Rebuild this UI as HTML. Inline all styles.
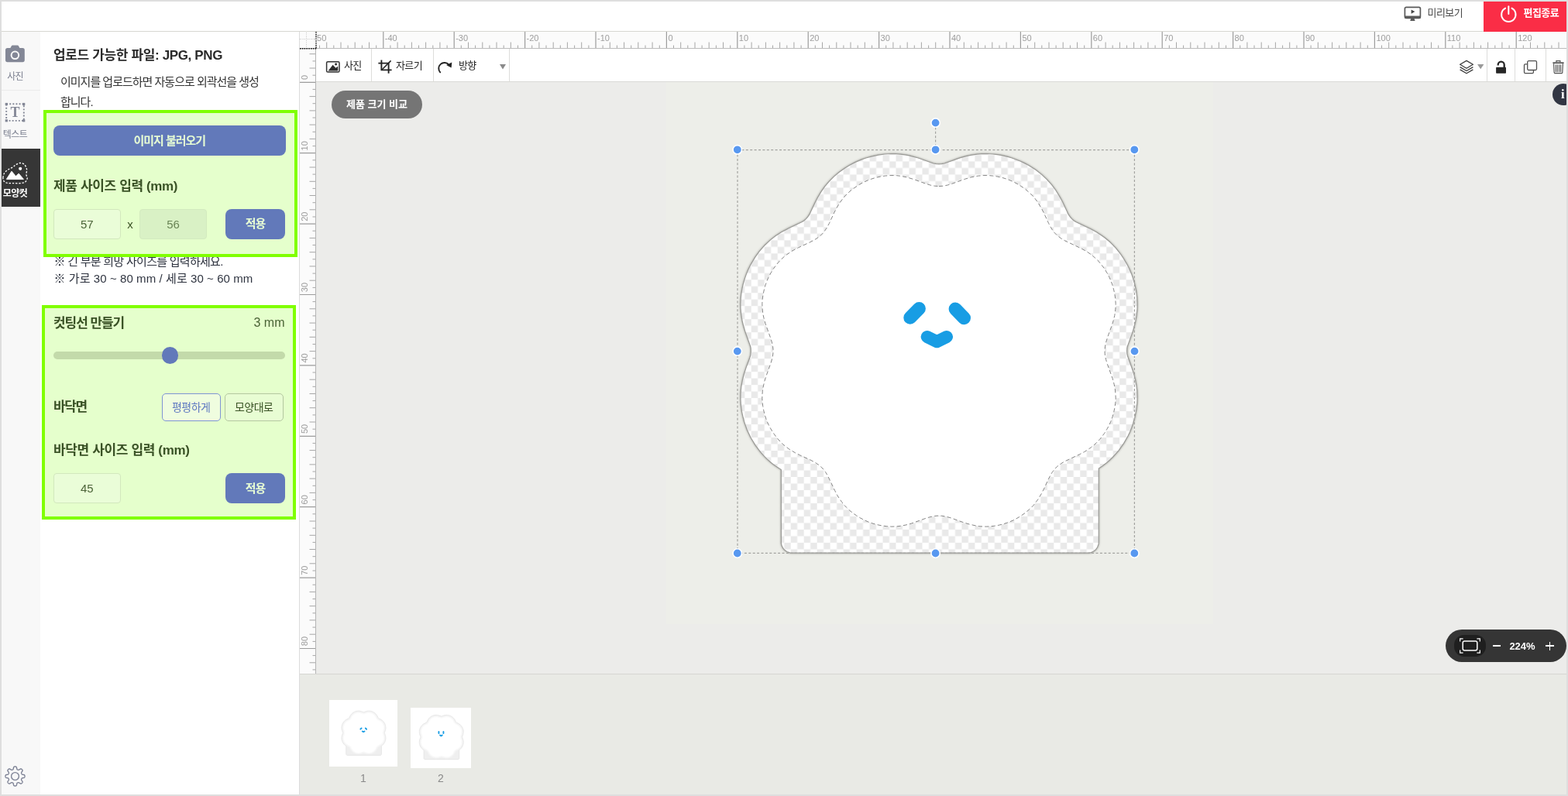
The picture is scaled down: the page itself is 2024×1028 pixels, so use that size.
<!DOCTYPE html>
<html lang="ko">
<head>
<meta charset="utf-8">
<title>모양컷 편집기</title>
<style>
*{box-sizing:border-box;margin:0;padding:0}
html,body{width:2024px;height:1028px;overflow:hidden}
body{position:relative;background:#dedede;font-family:"Liberation Sans","Noto Sans CJK KR",sans-serif;color:#333;font-size:14px;-webkit-font-smoothing:antialiased}
.abs{position:absolute}
.t{position:absolute;white-space:nowrap;line-height:1}
svg{position:absolute;overflow:visible}
/* frame */
#header{left:2px;top:2px;width:2020px;height:38px;background:#fff}
#hline{left:2px;top:40px;width:2020px;height:1px;background:#d7d7d1}
#rail{left:2px;top:41px;width:50px;height:985px;background:#f8f8f8}
#panel{left:52px;top:41px;width:334px;height:985px;background:#fff}
#pborder{left:386px;top:41px;width:1px;height:985px;background:#dcdcdc}
#rtop{left:387px;top:41px;width:1635px;height:21px;background:#fbfbfb}
#rtopline{left:387px;top:62px;width:1635px;height:1px;background:#bcbcbc}
#rleft{left:387px;top:63px;width:20px;height:807px;background:#fbfbfb}
#rleftline{left:407px;top:63px;width:1px;height:807px;background:#b4b4b4}
#toolbar{left:408px;top:63px;width:1614px;height:42px;background:#fff}
#tbline{left:408px;top:105px;width:1614px;height:1px;background:#dadad6}
#canvas{left:408px;top:106px;width:1614px;height:764px;background:#ececea}
#artboard{left:860px;top:106px;width:706px;height:700px;background:#edeee9}
#strip{left:387px;top:870px;width:1635px;height:156px;background:#e9eae5}
#stripline{left:387px;top:870px;width:1635px;height:1px;background:#d6d6d2}
.sep{position:absolute;top:63px;width:1px;height:42px;background:#dddddb}
/* side panel */
.h{position:absolute;left:69px;white-space:nowrap;font-weight:bold;font-size:17px;letter-spacing:-.36px;line-height:20px;color:#2b2b2b}
.g .h{color:#3a5226}
.hl{position:absolute;border:4px solid #80ff00;background:#e5ffcc}
.btn{letter-spacing:-1.05px;position:absolute;background:#6279ba;border-radius:8px;color:#e6fcd4;font-weight:bold;font-size:15px;text-align:center;white-space:nowrap}
.inp{position:absolute;border:1px solid #d2e8bd;border-radius:4px;background:#eafdd8;color:#4b6338;font-size:15px;text-align:center;white-space:nowrap}
.note{position:absolute;left:69.5px;white-space:nowrap;font-size:15px;line-height:20px;color:#2f3440}
.ob{letter-spacing:-.5px;position:absolute;border-radius:5px;font-size:14px;text-align:center;white-space:nowrap;line-height:34px;height:36px;top:508px}
</style>
</head>
<body>
<div id="root" style="position:absolute;left:0;top:0;width:2024px;height:1028px;will-change:transform">
<div id="header" class="abs"></div>
<div id="hline" class="abs"></div>
<div id="rail" class="abs"></div>
<div id="panel" class="abs"></div>
<div id="pborder" class="abs"></div>
<div id="rtop" class="abs"></div>
<div id="rtopline" class="abs"></div>
<div id="rleft" class="abs"></div>
<div id="rleftline" class="abs"></div>
<div id="toolbar" class="abs"></div>
<div id="tbline" class="abs"></div>
<div id="canvas" class="abs"></div>
<div id="artboard" class="abs"></div>
<div id="strip" class="abs"></div>
<div id="stripline" class="abs"></div>

<!-- preview -->
<svg class="abs" style="left:1812px;top:8px" width="23" height="20" viewBox="0 0 23 20">
<rect x="1.4" y="1.3" width="20" height="14" rx="1.8" fill="none" stroke="#5a5a5a" stroke-width="1.7"/>
<rect x="1" y="12.6" width="20.8" height="3.4" rx="1" fill="#5a5a5a"/>
<path d="M9.6,4.6L14.4,7.1L9.6,9.7Z" fill="#444"/>
<path d="M9.3,16H13.5L14.6,18.9H8.2Z" fill="#5a5a5a"/>
</svg>
<div class="t k" style="left:1842.5px;top:8.6px;font-size:13px;letter-spacing:-.55px;color:#4a4a4a;line-height:15px">미리보기</div>
<!-- exit -->
<div class="abs" style="left:1915px;top:2px;width:107px;height:39px;background:#fa2d46"></div>
<svg class="abs" style="left:1936px;top:7px" width="23" height="23" viewBox="0 0 23 23" fill="none" stroke="#fff" stroke-width="2" stroke-linecap="round">
<path d="M7.1,3.6A9.2,9.2 0 1 0 15.5,3.6"/>
<path d="M11.3,1.2V11"/>
</svg>
<div class="t k" style="left:1966.5px;top:8.6px;font-size:13px;letter-spacing:-.55px;font-weight:bold;color:#fff;line-height:15px">편집종료</div>

<!-- camera -->
<svg class="abs" style="left:6px;top:58px" width="27" height="23" viewBox="0 0 27 23">
<path d="M3.6,3.9H7.4L8.6,1.7A2,2 0 0 1 10.3,0.6H16.5A2,2 0 0 1 18.2,1.7L19.4,3.9H23.2A2.6,2.6 0 0 1 25.8,6.5V19.6A2.6,2.6 0 0 1 23.2,22.2H3.6A2.6,2.6 0 0 1 1,19.6V6.5A2.6,2.6 0 0 1 3.6,3.9Z" fill="#838796"/>
<circle cx="13.4" cy="13.3" r="4.8" fill="none" stroke="#f8f8f8" stroke-width="2"/>
</svg>
<div class="t k" style="left:2px;top:92px;width:35px;text-align:center;font-size:12px;letter-spacing:-.75px;color:#7c8090;line-height:14px">사진</div>
<div class="abs" style="left:2px;top:115.5px;width:50px;height:1.5px;background:#ebebeb"></div>
<!-- text -->
<svg class="abs" style="left:6px;top:132px" width="27" height="26" viewBox="0 0 27 26">
<rect x="2.2" y="2.3" width="22.6" height="21.6" fill="none" stroke="#838796" stroke-width="1.9" stroke-dasharray="1.9 2.2"/>
<g fill="#838796"><rect x=".7" y=".9" width="3.2" height="3.2"/><rect x="23.1" y=".9" width="3.2" height="3.2"/><rect x=".7" y="22.2" width="3.2" height="3.2"/><rect x="23.1" y="22.2" width="3.2" height="3.2"/></g>
<text x="13.5" y="19.4" text-anchor="middle" font-family="Liberation Serif, serif" font-weight="bold" font-size="18" fill="#838796">T</text>
</svg>
<div class="t k" style="left:2px;top:167px;width:35px;text-align:center;font-size:12px;letter-spacing:-.5px;color:#7c8090;line-height:14px;overflow:hidden">텍스트</div>
<!-- shape cut (active) -->
<div class="abs" style="left:2px;top:192px;width:50px;height:74.5px;background:#363636"></div>
<svg class="abs" style="left:3px;top:209px" width="34" height="29" viewBox="0 0 34 29">
<path d="M0.9,20.5C1.0,18.8 1.5,16.4 2.6,14.6C3.7,12.8 5.8,11.3 7.6,10.0C9.4,8.7 11.9,7.9 13.6,6.8C15.3,5.7 16.0,4.5 17.6,3.6C19.2,2.7 21.1,1.5 23.0,1.5C24.9,1.5 27.4,2.3 28.8,3.8C30.2,5.2 31.3,8.1 31.6,10.2C31.9,12.3 30.7,14.6 30.8,16.4C30.9,18.2 32.4,19.6 32.2,21.2C32.0,22.8 31.0,24.9 29.6,26.0C28.2,27.1 26.4,27.3 24.0,27.6C21.6,27.9 18.0,27.7 15.0,27.6C12.0,27.6 8.2,27.8 6.0,27.3C3.8,26.8 2.6,25.7 1.8,24.6C1.0,23.5 0.8,22.2 0.9,20.5Z" fill="none" stroke="#fff" stroke-width="1.3" stroke-dasharray="2.4 1.8"/>
<path d="M5.4,22.4L12,12.2L17.4,18.6L21.2,15.2L27.4,22.4Z" fill="#fff" stroke="#fff" stroke-width="1" stroke-linejoin="round"/>
<circle cx="23.2" cy="8.8" r="2.1" fill="#fff"/>
</svg>
<div class="t k" style="left:2px;top:243px;width:35px;text-align:center;font-size:12px;letter-spacing:-.5px;font-weight:bold;color:#fff;line-height:14px;overflow:hidden">모양컷</div>
<!-- settings gear -->
<svg class="abs" style="left:6px;top:989px" width="27" height="27" viewBox="-13.5 -13.5 27 27" fill="none" stroke="#7c8194" stroke-width="1.35" stroke-linejoin="round">
<circle r="4.9"/>
<path d="M3.44,-8.31 3.66,-8.23 3.89,-8.15 4.12,-8.08 4.37,-8.06 4.68,-8.11 5.10,-8.31 5.65,-8.70 6.30,-9.17 6.91,-9.50 7.39,-9.63 7.76,-9.58 8.07,-9.45 8.35,-9.27 8.60,-9.06 8.84,-8.84 9.06,-8.60 9.27,-8.35 9.45,-8.07 9.58,-7.76 9.63,-7.39 9.50,-6.91 9.17,-6.30 8.70,-5.65 8.31,-5.10 8.11,-4.68 8.06,-4.37 8.08,-4.12 8.15,-3.89 8.23,-3.66 8.31,-3.44 8.41,-3.23 8.51,-3.01 8.63,-2.80 8.79,-2.60 9.05,-2.42 9.48,-2.28 10.15,-2.16 10.94,-2.03 11.60,-1.84 12.03,-1.58 12.26,-1.29 12.39,-0.98 12.46,-0.65 12.49,-0.33 12.50,-0.00 12.49,0.33 12.46,0.65 12.39,0.98 12.26,1.29 12.03,1.58 11.60,1.84 10.94,2.03 10.15,2.16 9.48,2.28 9.05,2.42 8.79,2.60 8.63,2.80 8.51,3.01 8.41,3.23 8.31,3.44 8.23,3.66 8.15,3.89 8.08,4.12 8.06,4.37 8.11,4.68 8.31,5.10 8.70,5.65 9.17,6.30 9.50,6.91 9.63,7.39 9.58,7.76 9.45,8.07 9.27,8.35 9.06,8.60 8.84,8.84 8.60,9.06 8.35,9.27 8.07,9.45 7.76,9.58 7.39,9.63 6.91,9.50 6.30,9.17 5.65,8.70 5.10,8.31 4.68,8.11 4.37,8.06 4.12,8.08 3.89,8.15 3.66,8.23 3.44,8.31 3.23,8.41 3.01,8.51 2.80,8.63 2.60,8.79 2.42,9.05 2.28,9.48 2.16,10.15 2.03,10.94 1.84,11.60 1.58,12.03 1.29,12.26 0.98,12.39 0.65,12.46 0.33,12.49 0.00,12.50 -0.33,12.49 -0.65,12.46 -0.98,12.39 -1.29,12.26 -1.58,12.03 -1.84,11.60 -2.03,10.94 -2.16,10.15 -2.28,9.48 -2.42,9.05 -2.60,8.79 -2.80,8.63 -3.01,8.51 -3.23,8.41 -3.44,8.31 -3.66,8.23 -3.89,8.15 -4.12,8.08 -4.37,8.06 -4.68,8.11 -5.10,8.31 -5.65,8.70 -6.30,9.17 -6.91,9.50 -7.39,9.63 -7.76,9.58 -8.07,9.45 -8.35,9.27 -8.60,9.06 -8.84,8.84 -9.06,8.60 -9.27,8.35 -9.45,8.07 -9.58,7.76 -9.63,7.39 -9.50,6.91 -9.17,6.30 -8.70,5.65 -8.31,5.10 -8.11,4.68 -8.06,4.37 -8.08,4.12 -8.15,3.89 -8.23,3.66 -8.31,3.44 -8.41,3.23 -8.51,3.01 -8.63,2.80 -8.79,2.60 -9.05,2.42 -9.48,2.28 -10.15,2.16 -10.94,2.03 -11.60,1.84 -12.03,1.58 -12.26,1.29 -12.39,0.98 -12.46,0.65 -12.49,0.33 -12.50,0.00 -12.49,-0.33 -12.46,-0.65 -12.39,-0.98 -12.26,-1.29 -12.03,-1.58 -11.60,-1.84 -10.94,-2.03 -10.15,-2.16 -9.48,-2.28 -9.05,-2.42 -8.79,-2.60 -8.63,-2.80 -8.51,-3.01 -8.41,-3.23 -8.31,-3.44 -8.23,-3.66 -8.15,-3.89 -8.08,-4.12 -8.06,-4.37 -8.11,-4.68 -8.31,-5.10 -8.70,-5.65 -9.17,-6.30 -9.50,-6.91 -9.63,-7.39 -9.58,-7.76 -9.45,-8.07 -9.27,-8.35 -9.06,-8.60 -8.84,-8.84 -8.60,-9.06 -8.35,-9.27 -8.07,-9.45 -7.76,-9.58 -7.39,-9.63 -6.91,-9.50 -6.30,-9.17 -5.65,-8.70 -5.10,-8.31 -4.68,-8.11 -4.37,-8.06 -4.12,-8.08 -3.89,-8.15 -3.66,-8.23 -3.44,-8.31 -3.23,-8.41 -3.01,-8.51 -2.80,-8.63 -2.60,-8.79 -2.42,-9.05 -2.28,-9.48 -2.16,-10.15 -2.03,-10.94 -1.84,-11.60 -1.58,-12.03 -1.29,-12.26 -0.98,-12.39 -0.65,-12.46 -0.33,-12.49 -0.00,-12.50 0.33,-12.49 0.65,-12.46 0.98,-12.39 1.29,-12.26 1.58,-12.03 1.84,-11.60 2.03,-10.94 2.16,-10.15 2.28,-9.48 2.42,-9.05 2.60,-8.79 2.80,-8.63 3.01,-8.51 3.23,-8.41Z"/>
</svg>

<div class="h k" style="top:62px">업로드 가능한 파일: JPG, PNG</div>
<div class="t k" style="left:78px;top:95.8px;font-size:15px;letter-spacing:-1px;line-height:20px;color:#333">이미지를 업로드하면 자동으로 외곽선을 생성</div>
<div class="t k" style="left:78px;top:121.7px;font-size:15px;letter-spacing:-1px;line-height:20px;color:#333">합니다.</div>
<div class="note k" style="top:327.5px;letter-spacing:-.72px">※ 긴 부분 희망 사이즈를 입력하세요.</div>
<div class="note k" style="top:349.6px;letter-spacing:.08px">※ 가로 30 ~ 80 mm / 세로 30 ~ 60 mm</div>

<!-- highlight box 1 -->
<div class="hl" style="left:56px;top:142px;width:328px;height:190px"></div>
<div class="g">
<div class="btn k" style="left:69px;top:162px;width:299.5px;height:39px;line-height:39px">이미지 불러오기</div>
<div class="h k" style="top:231px">제품 사이즈 입력 (mm)</div>
<div class="inp" style="left:69px;top:270px;width:86.5px;height:38.5px;line-height:38px">57</div>
<div class="t" style="left:158px;top:280px;width:20px;text-align:center;font-size:15px;line-height:20px;color:#3a5226">x</div>
<div class="inp" style="left:180px;top:270px;width:87px;height:38.5px;line-height:38px;background:#d9f1c5;border-color:#d3eabf;color:#6a8556">56</div>
<div class="btn k" style="left:291px;top:270px;width:77px;height:38.5px;line-height:38.5px">적용</div>
</div>

<!-- highlight box 2 -->
<div class="hl" style="left:54px;top:394px;width:328px;height:277px"></div>
<div class="g">
<div class="h k" style="top:408px;letter-spacing:-1.05px">컷팅선 만들기</div>
<div class="t" style="left:300px;top:406.5px;width:67.5px;text-align:right;font-size:16px;line-height:20px;color:#4a6336">3 mm</div>
<div class="abs" style="left:69px;top:453.7px;width:299.4px;height:10.7px;border-radius:5.4px;background:#c3daaa"></div>
<div class="abs" style="left:208.6px;top:448.4px;width:21.4px;height:21.4px;border-radius:50%;background:#6279ba"></div>
<div class="h k" style="top:516px;letter-spacing:-1.35px">바닥면</div>
<div class="ob k" style="left:208.5px;width:76.5px;border:1px solid #7f94d3;background:#effddf;color:#5f78c1">평평하게</div>
<div class="ob k" style="left:289.5px;width:76.5px;border:1px solid #b4c7a0;background:#e8fdd3;color:#3a5226">모양대로</div>
<div class="h k" style="top:571.5px">바닥면 사이즈 입력 (mm)</div>
<div class="inp" style="left:69px;top:611px;width:86.5px;height:38.5px;line-height:38px">45</div>
<div class="btn k" style="left:291px;top:611px;width:77px;height:39px;line-height:39px">적용</div>
</div>

<svg class="abs" style="left:0;top:0" width="2024" height="1028">
<path d="M494.8,41V62M586.2,41V62M677.6,41V62M769.0,41V62M860.4,41V62M951.8,41V62M1043.2,41V62M1134.6,41V62M1226.0,41V62M1317.4,41V62M1408.8,41V62M1500.2,41V62M1591.6,41V62M1683.0,41V62M1774.4,41V62M1865.8,41V62M1957.2,41V62" stroke="#9c9c9c" stroke-width="1.2" fill="none"/>
<path d="M421.7,54.5V62M440.0,54.5V62M458.2,54.5V62M476.5,54.5V62M513.1,54.5V62M531.4,54.5V62M549.6,54.5V62M567.9,54.5V62M604.5,54.5V62M622.8,54.5V62M641.0,54.5V62M659.3,54.5V62M695.9,54.5V62M714.2,54.5V62M732.4,54.5V62M750.7,54.5V62M787.3,54.5V62M805.6,54.5V62M823.8,54.5V62M842.1,54.5V62M878.7,54.5V62M897.0,54.5V62M915.2,54.5V62M933.5,54.5V62M970.1,54.5V62M988.4,54.5V62M1006.6,54.5V62M1024.9,54.5V62M1061.5,54.5V62M1079.8,54.5V62M1098.0,54.5V62M1116.3,54.5V62M1152.9,54.5V62M1171.2,54.5V62M1189.4,54.5V62M1207.7,54.5V62M1244.3,54.5V62M1262.6,54.5V62M1280.8,54.5V62M1299.1,54.5V62M1335.7,54.5V62M1354.0,54.5V62M1372.2,54.5V62M1390.5,54.5V62M1427.1,54.5V62M1445.4,54.5V62M1463.6,54.5V62M1481.9,54.5V62M1518.5,54.5V62M1536.8,54.5V62M1555.0,54.5V62M1573.3,54.5V62M1609.9,54.5V62M1628.2,54.5V62M1646.4,54.5V62M1664.7,54.5V62M1701.3,54.5V62M1719.6,54.5V62M1737.8,54.5V62M1756.1,54.5V62M1792.7,54.5V62M1811.0,54.5V62M1829.2,54.5V62M1847.5,54.5V62M1884.1,54.5V62M1902.4,54.5V62M1920.6,54.5V62M1938.9,54.5V62M1975.5,54.5V62M1993.8,54.5V62M2012.0,54.5V62M412.5,58.5V62M430.8,58.5V62M449.1,58.5V62M467.4,58.5V62M485.7,58.5V62M503.9,58.5V62M522.2,58.5V62M540.5,58.5V62M558.8,58.5V62M577.1,58.5V62M595.3,58.5V62M613.6,58.5V62M631.9,58.5V62M650.2,58.5V62M668.5,58.5V62M686.7,58.5V62M705.0,58.5V62M723.3,58.5V62M741.6,58.5V62M759.9,58.5V62M778.1,58.5V62M796.4,58.5V62M814.7,58.5V62M833.0,58.5V62M851.3,58.5V62M869.5,58.5V62M887.8,58.5V62M906.1,58.5V62M924.4,58.5V62M942.7,58.5V62M960.9,58.5V62M979.2,58.5V62M997.5,58.5V62M1015.8,58.5V62M1034.1,58.5V62M1052.3,58.5V62M1070.6,58.5V62M1088.9,58.5V62M1107.2,58.5V62M1125.5,58.5V62M1143.7,58.5V62M1162.0,58.5V62M1180.3,58.5V62M1198.6,58.5V62M1216.9,58.5V62M1235.1,58.5V62M1253.4,58.5V62M1271.7,58.5V62M1290.0,58.5V62M1308.3,58.5V62M1326.5,58.5V62M1344.8,58.5V62M1363.1,58.5V62M1381.4,58.5V62M1399.7,58.5V62M1417.9,58.5V62M1436.2,58.5V62M1454.5,58.5V62M1472.8,58.5V62M1491.1,58.5V62M1509.3,58.5V62M1527.6,58.5V62M1545.9,58.5V62M1564.2,58.5V62M1582.5,58.5V62M1600.7,58.5V62M1619.0,58.5V62M1637.3,58.5V62M1655.6,58.5V62M1673.9,58.5V62M1692.1,58.5V62M1710.4,58.5V62M1728.7,58.5V62M1747.0,58.5V62M1765.3,58.5V62M1783.5,58.5V62M1801.8,58.5V62M1820.1,58.5V62M1838.4,58.5V62M1856.7,58.5V62M1874.9,58.5V62M1893.2,58.5V62M1911.5,58.5V62M1929.8,58.5V62M1948.1,58.5V62M1966.3,58.5V62M1984.6,58.5V62M2002.9,58.5V62" stroke="#a6a6a6" stroke-width="1" fill="none"/>
<path d="M387,106.3H407M387,197.7H407M387,289.1H407M387,380.5H407M387,471.9H407M387,563.3H407M387,654.7H407M387,746.1H407M387,837.5H407" stroke="#9c9c9c" stroke-width="1.2" fill="none"/>
<path d="M399.5,69.7H407M399.5,88.0H407M399.5,124.6H407M399.5,142.9H407M399.5,161.1H407M399.5,179.4H407M399.5,216.0H407M399.5,234.3H407M399.5,252.5H407M399.5,270.8H407M399.5,307.4H407M399.5,325.7H407M399.5,343.9H407M399.5,362.2H407M399.5,398.8H407M399.5,417.1H407M399.5,435.3H407M399.5,453.6H407M399.5,490.2H407M399.5,508.5H407M399.5,526.7H407M399.5,545.0H407M399.5,581.6H407M399.5,599.9H407M399.5,618.1H407M399.5,636.4H407M399.5,673.0H407M399.5,691.3H407M399.5,709.5H407M399.5,727.8H407M399.5,764.4H407M399.5,782.7H407M399.5,800.9H407M399.5,819.2H407M399.5,855.8H407M403.5,78.9H407M403.5,97.2H407M403.5,115.4H407M403.5,133.7H407M403.5,152.0H407M403.5,170.3H407M403.5,188.6H407M403.5,206.8H407M403.5,225.1H407M403.5,243.4H407M403.5,261.7H407M403.5,280.0H407M403.5,298.2H407M403.5,316.5H407M403.5,334.8H407M403.5,353.1H407M403.5,371.4H407M403.5,389.6H407M403.5,407.9H407M403.5,426.2H407M403.5,444.5H407M403.5,462.8H407M403.5,481.0H407M403.5,499.3H407M403.5,517.6H407M403.5,535.9H407M403.5,554.2H407M403.5,572.4H407M403.5,590.7H407M403.5,609.0H407M403.5,627.3H407M403.5,645.6H407M403.5,663.8H407M403.5,682.1H407M403.5,700.4H407M403.5,718.7H407M403.5,737.0H407M403.5,755.2H407M403.5,773.5H407M403.5,791.8H407M403.5,810.1H407M403.5,828.4H407M403.5,846.6H407M403.5,864.9H407" stroke="#a6a6a6" stroke-width="1" fill="none"/>
<path d="M387,50.5H407M395.5,42V62" stroke="#c4c4c4" stroke-width="1" stroke-dasharray="1 1.5" fill="none"/>
<path d="M408,41V63" stroke="#111" stroke-width="1.4" stroke-dasharray="1.6 1.2" fill="none"/>
<path d="M387,62.8H408.6" stroke="#111" stroke-width="1.4" stroke-dasharray="1.6 1.2" fill="none"/>
<g font-family="Liberation Sans, sans-serif" font-size="11" fill="#9d9d9d">
<text x="405.4" y="52.6">-50</text>
<text x="496.8" y="52.6">-40</text>
<text x="588.2" y="52.6">-30</text>
<text x="679.6" y="52.6">-20</text>
<text x="771.0" y="52.6">-10</text>
<text x="862.4" y="52.6">0</text>
<text x="953.8" y="52.6">10</text>
<text x="1045.2" y="52.6">20</text>
<text x="1136.6" y="52.6">30</text>
<text x="1228.0" y="52.6">40</text>
<text x="1319.4" y="52.6">50</text>
<text x="1410.8" y="52.6">60</text>
<text x="1502.2" y="52.6">70</text>
<text x="1593.6" y="52.6">80</text>
<text x="1685.0" y="52.6">90</text>
<text x="1776.4" y="52.6">100</text>
<text x="1867.8" y="52.6">110</text>
<text x="1959.2" y="52.6">120</text>
<text transform="translate(397.2,103.0) rotate(-90)">0</text>
<text transform="translate(397.2,194.4) rotate(-90)">10</text>
<text transform="translate(397.2,285.8) rotate(-90)">20</text>
<text transform="translate(397.2,377.2) rotate(-90)">30</text>
<text transform="translate(397.2,468.6) rotate(-90)">40</text>
<text transform="translate(397.2,560.0) rotate(-90)">50</text>
<text transform="translate(397.2,651.4) rotate(-90)">60</text>
<text transform="translate(397.2,742.8) rotate(-90)">70</text>
<text transform="translate(397.2,834.2) rotate(-90)">80</text>
</g></svg>
<div class="sep" style="left:479px"></div>
<div class="sep" style="left:559px"></div>
<div class="sep" style="left:657px"></div>
<div class="sep" style="left:1919px"></div>
<div class="sep" style="left:1955px"></div>
<div class="sep" style="left:1995px"></div>
<!-- photo -->
<svg class="abs" style="left:420px;top:78px" width="20" height="17" viewBox="0 0 20 17">
<rect x="1.6" y="1.7" width="16.4" height="13.4" rx="1.6" fill="none" stroke="#333" stroke-width="1.5"/>
<path d="M3.6,13.5L9.6,5.8L13.4,9.7L16.2,7.6V13.5Z" fill="#2c2c2c"/>
<circle cx="13.6" cy="5" r="1.45" fill="#2c2c2c"/>
</svg>
<div class="t k" style="left:444px;top:77px;font-size:13px;letter-spacing:-.62px;color:#262626;line-height:15px">사진</div>
<!-- crop -->
<svg class="abs" style="left:487px;top:76px" width="20" height="20" viewBox="0 0 20 20" fill="none" stroke="#222" stroke-width="1.9">
<path d="M5.4,1.4V14.4H18.6"/>
<path d="M1.4,5.6H14.6V18.8"/>
<path d="M6,14L17.6,2.4" stroke-width="1.5"/>
</svg>
<div class="t k" style="left:511px;top:77px;font-size:13px;letter-spacing:-.62px;color:#262626;line-height:15px">자르기</div>
<!-- rotate -->
<svg class="abs" style="left:564px;top:78px" width="21" height="17" viewBox="0 0 21 17" fill="none">
<path d="M4.2,15.4A7.2,7.2 0 0 1 15.2,5.4" stroke="#222" stroke-width="1.9" stroke-linecap="round"/>
<path d="M12.1,5.9L19.3,2.4L18.6,9.6Z" fill="#222"/>
</svg>
<div class="t k" style="left:592px;top:77px;font-size:13px;letter-spacing:-.62px;color:#262626;line-height:15px">방향</div>
<svg class="abs" style="left:645px;top:83px" width="8" height="7" viewBox="0 0 8 7"><path d="M0,0H8L4,6.6Z" fill="#8a8a8a"/></svg>
<!-- layers -->
<svg class="abs" style="left:1883px;top:77px" width="20" height="19" viewBox="0 0 20 19" fill="none" stroke="#3c3c3c" stroke-width="1.3" stroke-linejoin="round">
<path d="M10,1.4L18.4,6.3L10,11.2L1.6,6.3Z"/>
<path d="M1.6,9.6L10,14.5L18.4,9.6"/>
<path d="M1.6,12.9L10,17.8L18.4,12.9"/>
</svg>
<svg class="abs" style="left:1907.3px;top:83.4px" width="8.4" height="6.4" viewBox="0 0 8.4 6.4"><path d="M0,0H8.4L4.2,6.2Z" fill="#999"/></svg>
<!-- unlock -->
<svg class="abs" style="left:1930px;top:77px" width="16" height="19" viewBox="0 0 16 19">
<rect x="1.1" y="9.7" width="12.9" height="8" rx=".8" fill="#262626"/>
<path d="M3.7,7.5V6.7A4,4 0 0 1 11.7,6.7V10" fill="none" stroke="#262626" stroke-width="2.3"/>
</svg>
<!-- copy -->
<svg class="abs" style="left:1966px;top:77px" width="19" height="19" viewBox="0 0 19 19" fill="none" stroke="#505050" stroke-width="1.3">
<path d="M5.2,5.8H2.9A1.4,1.4 0 0 0 1.5,7.2V16.3A1.4,1.4 0 0 0 2.9,17.7H12A1.4,1.4 0 0 0 13.4,16.3V14"/>
<rect x="5.7" y="1.7" width="11.8" height="11.8" rx="1.5"/>
</svg>
<!-- trash -->
<svg class="abs" style="left:2003px;top:77px" width="17" height="19" viewBox="0 0 17 19" fill="none" stroke="#555" stroke-width="1.2">
<path d="M5.9,3.3V1.6H10.9V3.3"/>
<path d="M1.4,4.2H15.6" stroke-width="1.8"/>
<path d="M2.6,5.2L3.2,16.6A1.2,1.2 0 0 0 4.4,17.6H12.6A1.2,1.2 0 0 0 13.8,16.6L14.4,5.2"/>
<path d="M5.4,6.4V16.2M7.4,6.4V16.2M9.6,6.4V16.2M11.6,6.4V16.2" stroke-width="1.1"/>
</svg>

<div class="abs" style="left:428px;top:116.5px;width:117px;height:36.5px;border-radius:19px;background:#757575"></div>
<div class="t k" style="left:428px;top:116px;width:117px;height:37px;line-height:37px;text-align:center;color:#fff;font-weight:bold;font-size:13px">제품 크기 비교</div>

<svg class="abs" style="left:0;top:0" width="2024" height="1028">
<defs>
<pattern id="chk" x="1003.7" y="599" width="16.98" height="16.98" patternUnits="userSpaceOnUse">
<rect width="16.98" height="16.98" fill="#fff"/>
<rect x="8.49" y="0" width="8.49" height="8.49" fill="#e9e9e9"/>
<rect x="0" y="8.49" width="8.49" height="8.49" fill="#e9e9e9"/>
</pattern>
<filter id="sh" x="-5%" y="-5%" width="110%" height="110%"><feGaussianBlur stdDeviation="1.3"/></filter>
<g id="face" fill="none" stroke="#189de4" stroke-linecap="round" stroke-linejoin="round">
<path d="M1174.8,410.2L1186.4,398.6M1233.1,399L1244.5,410.7" stroke-width="17"/>
<path d="M1196.7,435L1209.4,441.2L1222,435" stroke-width="16"/>
</g>
<path id="outerp" d="M968.3,446.3 969.1,449.7 969.3,453.3 968.8,458.6 967.8,462.0 963.0,474.9 960.4,483.0 958.3,491.2 956.7,500.1 956.0,508.0 955.9,514.9 956.4,523.4 957.5,531.7 958.7,537.2 960.5,544.4 964.2,554.9 969.1,565.2 975.1,575.1 981.9,584.2 985.7,588.4 989.8,592.6 993.8,596.2 998.4,599.9 1003.2,603.3 1008.3,606.6 1008.4,701.6 1008.9,704.3 1010.7,708.0 1012.4,710.1 1015.7,712.5 1019.6,713.9 1022.3,714.2 1404.3,714.2 1408.4,713.6 1412.1,711.8 1414.2,710.1 1416.6,706.8 1418.0,702.9 1418.3,700.2 1418.3,605.0 1423.2,601.7 1428.0,598.1 1432.5,594.2 1436.3,590.5 1440.3,586.2 1444.0,581.8 1450.7,572.4 1456.2,562.8 1458.6,557.7 1460.8,552.3 1462.6,547.0 1464.7,539.9 1467.0,528.5 1467.9,519.9 1468.1,511.9 1467.8,505.0 1466.8,497.0 1465.6,490.6 1463.4,482.4 1461.0,475.0 1455.7,460.3 1454.9,456.9 1454.7,453.3 1454.9,449.7 1455.7,446.3 1461.1,431.4 1463.5,424.1 1465.6,415.9 1467.1,407.5 1468.0,398.6 1468.1,391.7 1467.6,383.2 1466.5,374.9 1464.7,366.9 1462.6,359.6 1460.5,353.4 1457.4,346.3 1454.5,340.8 1450.3,333.7 1445.7,327.0 1440.8,320.9 1436.3,316.1 1431.9,311.8 1425.8,306.8 1420.4,302.9 1415.4,299.8 1408.2,295.8 1389.2,286.8 1386.2,284.9 1383.5,282.6 1381.2,279.9 1379.2,276.9 1371.5,260.5 1367.2,252.7 1362.7,245.5 1357.8,238.9 1351.5,231.8 1344.9,225.6 1336.6,219.1 1327.4,213.3 1322.4,210.6 1316.8,208.0 1306.2,204.0 1300.9,202.4 1293.6,200.7 1287.5,199.7 1281.7,199.0 1274.0,198.5 1267.2,198.6 1261.1,199.1 1253.1,200.3 1246.8,201.7 1239.0,203.9 1219.0,211.0 1215.5,211.7 1212.0,211.9 1208.5,211.7 1205.0,211.0 1185.2,204.0 1173.7,200.9 1168.0,199.8 1162.1,199.1 1156.2,198.6 1150.2,198.5 1142.1,199.0 1133.9,200.1 1125.6,201.8 1117.8,204.0 1111.7,206.1 1104.1,209.4 1097.2,213.0 1090.3,217.2 1082.9,222.5 1076.3,228.1 1070.1,234.4 1064.4,241.2 1059.7,247.9 1055.3,255.3 1051.5,262.7 1044.8,276.9 1042.8,279.9 1040.5,282.6 1037.8,284.9 1034.8,286.8 1017.9,294.8 1008.6,299.8 1001.2,304.6 994.4,309.9 987.1,316.7 980.1,324.6 974.7,332.1 969.1,341.5 965.7,348.2 963.5,353.6 961.4,359.6 959.3,366.7 957.9,372.8 956.7,380.2 956.1,386.7 955.8,392.5 956.0,398.5 956.5,404.4 957.3,410.2 958.4,416.0 959.8,421.5 962.0,428.8Z"/>
<path id="innerp" d="M1212.0,240.6 1217.6,240.2 1223.3,239.0 1229.1,237.2 1245.4,231.3 1253.9,228.8 1262.4,227.2 1268.9,226.6 1273.1,226.5 1277.4,226.7 1281.6,227.1 1287.8,228.1 1293.9,229.5 1297.9,230.7 1303.8,232.9 1307.7,234.6 1315.0,238.5 1320.3,242.0 1323.7,244.5 1330.1,250.0 1333.1,253.0 1335.9,256.3 1339.7,261.5 1344.3,269.0 1347.3,274.8 1353.6,288.4 1356.5,293.8 1358.5,297.1 1360.8,300.1 1364.7,304.2 1369.2,307.6 1374.2,310.7 1395.5,320.8 1401.3,324.0 1405.0,326.3 1410.2,330.2 1413.5,333.0 1418.0,337.4 1422.1,342.3 1425.8,347.3 1429.1,352.7 1432.0,358.2 1433.7,362.0 1435.9,367.9 1437.6,373.9 1438.9,380.0 1439.8,386.2 1440.2,392.5 1440.1,396.8 1439.7,401.0 1438.8,407.4 1437.8,411.7 1436.0,418.0 1429.4,436.3 1427.6,442.1 1426.4,447.7 1426.0,453.3 1426.4,458.9 1427.6,464.5 1429.4,470.3 1436.0,488.6 1437.8,494.9 1439.2,501.3 1439.9,507.7 1440.2,514.1 1439.8,520.4 1438.9,526.6 1437.6,532.7 1435.9,538.7 1433.7,544.6 1432.0,548.4 1429.1,553.9 1425.8,559.3 1422.1,564.3 1419.4,567.6 1415.0,572.2 1411.9,575.0 1408.5,577.7 1403.1,581.5 1399.4,583.7 1393.5,586.8 1374.2,595.9 1369.2,599.0 1364.7,602.4 1360.8,606.5 1358.5,609.5 1356.5,612.8 1353.6,618.2 1347.3,631.8 1344.3,637.6 1339.7,645.1 1335.9,650.3 1333.1,653.6 1330.1,656.6 1323.7,662.1 1316.8,667.0 1309.6,671.1 1303.8,673.7 1299.9,675.2 1295.9,676.5 1289.9,678.1 1283.7,679.2 1279.5,679.7 1273.1,680.1 1268.9,680.0 1264.6,679.7 1260.3,679.1 1251.7,677.2 1243.3,674.6 1227.2,668.8 1221.4,667.2 1215.7,666.2 1210.1,666.1 1206.4,666.4 1200.7,667.6 1194.9,669.4 1176.5,676.0 1170.1,677.8 1163.7,679.1 1157.3,679.9 1150.9,680.1 1144.5,679.7 1138.3,678.9 1132.1,677.6 1126.1,675.9 1120.2,673.7 1116.3,672.0 1110.8,669.1 1105.4,665.8 1100.3,662.1 1097.0,659.5 1092.4,655.1 1089.5,652.0 1086.8,648.6 1083.1,643.3 1080.8,639.6 1077.7,633.7 1068.5,614.5 1065.5,609.5 1062.0,605.1 1057.9,601.2 1054.8,599.0 1051.5,596.9 1046.2,594.1 1032.5,587.8 1026.5,584.8 1019.0,580.3 1013.8,576.4 1010.5,573.6 1007.4,570.7 1001.9,564.3 997.1,557.5 992.9,550.3 990.3,544.6 988.8,540.7 987.5,536.7 985.9,530.7 984.7,524.5 984.2,520.4 983.8,514.1 983.9,509.8 984.3,505.6 984.8,501.3 986.7,492.8 989.4,484.4 995.2,468.4 996.9,462.6 997.8,457.0 998.0,451.4 997.6,447.7 996.4,442.1 994.6,436.3 988.0,418.0 986.2,411.7 984.8,405.3 984.1,398.9 983.8,392.5 984.2,386.2 985.1,380.0 986.4,373.9 988.1,367.9 990.3,362.0 992.0,358.2 994.9,352.7 998.2,347.3 1001.9,342.3 1004.6,339.0 1009.0,334.4 1012.1,331.6 1015.5,328.9 1020.9,325.1 1024.6,322.9 1030.5,319.8 1046.2,312.5 1051.5,309.7 1056.4,306.5 1060.7,302.9 1064.3,298.6 1067.5,293.8 1070.4,288.4 1076.7,274.8 1079.7,269.0 1083.1,263.3 1086.8,258.0 1090.9,253.0 1093.9,250.0 1097.0,247.1 1102.0,243.2 1109.0,238.5 1114.4,235.5 1120.2,232.9 1124.1,231.4 1130.1,229.5 1136.2,228.1 1142.4,227.1 1148.7,226.6 1153.0,226.5 1157.3,226.7 1161.6,227.2 1170.1,228.8 1178.6,231.3 1194.9,237.2 1200.7,239.0 1206.4,240.2Z"/>
</defs>
<!-- soft shadow + outline -->
<use href="#outerp" fill="none" stroke="#6f6f6a" stroke-width="2.2" opacity=".45" filter="url(#sh)"/>
<use href="#outerp" fill="url(#chk)" stroke="#9a9a96" stroke-width="1.2"/>
<use href="#innerp" fill="#fff" stroke="#868686" stroke-width="1" stroke-dasharray="5.2 3.2"/>
<use href="#face"/>
<!-- selection box -->
<g fill="none" stroke="#a3a3a0" stroke-width="1.2" stroke-dasharray="3 2.4">
<path d="M952,193.7H1464.4V714.4H952Z"/>
<path d="M1207.6,159V193"/>
</g>
<g fill="#5898f0" stroke="#fff" stroke-width="1.6">
<circle cx="1207.6" cy="158.6" r="5.7"/>
<circle cx="951.8" cy="193.3" r="5.7"/><circle cx="1207.6" cy="193.3" r="5.7"/><circle cx="1464.3" cy="193.3" r="5.7"/>
<circle cx="951.8" cy="453.6" r="5.7"/><circle cx="1464.5" cy="453.6" r="5.7"/>
<circle cx="951.8" cy="714.5" r="5.7"/><circle cx="1207.6" cy="714.5" r="5.7"/><circle cx="1464.3" cy="714.5" r="5.7"/>
</g>
</svg>

<!-- info badge -->
<div class="abs" style="left:2003.6px;top:108px;width:18.4px;height:28px;overflow:hidden">
<div class="abs" style="left:0;top:0;width:28px;height:28px;border-radius:50%;background:#323643"></div>
<div class="t" style="left:11.4px;top:6px;font-family:'Liberation Serif',serif;font-weight:bold;font-size:16.5px;color:#fff">i</div>
</div>

<!-- zoom control -->
<div class="abs" style="left:1866px;top:813px;width:156px;height:42px;border-radius:21px;background:#353535"></div>
<div class="abs" style="left:1877px;top:820px;width:41px;height:28px;border-radius:13px;background:#1f1f1f"></div>
<svg class="abs" style="left:1884px;top:824px" width="27" height="20" viewBox="0 0 27 20" fill="none" stroke="#fff">
<rect x="4.2" y="4" width="18.6" height="12" rx="2.2" stroke-width="1.5"/>
<path d="M0.7,4.4V0.9H4.6M22.4,0.9H26.3V4.4M26.3,15.6V19.1H22.4M4.6,19.1H0.7V15.6" stroke-width="1.2"/>
</svg>
<div class="abs" style="left:1927px;top:833.3px;width:10px;height:1.6px;background:#fff"></div>
<div class="t" style="left:1940px;top:827px;width:50px;text-align:center;font-size:13px;font-weight:bold;color:#fff;line-height:15px">224%</div>
<div class="abs" style="left:1995px;top:833.3px;width:11px;height:1.6px;background:#fff"></div>
<div class="abs" style="left:1999.7px;top:828.6px;width:1.6px;height:11px;background:#fff"></div>

<div class="abs" style="left:425px;top:904px;width:88px;height:86px;background:#fff"></div>
<div class="abs" style="left:530px;top:913.5px;width:78px;height:78px;background:#fff"></div>
<svg class="abs" style="left:0;top:0" width="2024" height="1028">
<defs><filter id="tb" x="-10%" y="-10%" width="120%" height="120%"><feGaussianBlur stdDeviation="9"/></filter></defs>
<!-- thumb 1: main shape scaled by .111 ; outer x 955.8..1468.1 -> 440.9..497.8 -->
<g transform="translate(334.8,896.1) scale(0.1111)">
<use href="#outerp" fill="#efefef" stroke="#e4e4e4" stroke-width="8"/>
<use href="#innerp" fill="#fff" stroke="#fff" stroke-width="26" filter="url(#tb)"/>
<use href="#innerp" fill="#fff"/>
<use href="#face"/>
</g>
<!-- thumb 2 -->
<g transform="translate(435.1,901.4) scale(0.1111)">
<use href="#outerp" fill="#efefef" stroke="#e4e4e4" stroke-width="8"/>
<use href="#innerp" fill="#fff" stroke="#fff" stroke-width="26" filter="url(#tb)"/>
<use href="#innerp" fill="#fff"/>
<g fill="none" stroke="#189de4" stroke-linecap="round" stroke-linejoin="round" stroke-width="17">
<path d="M1182,392V410M1236,392V410"/>
<path d="M1197,432L1209,441L1221,432"/>
</g>
</g>
</svg>
<div class="t" style="left:449px;top:997px;width:40px;text-align:center;font-size:14px;line-height:16px;color:#8a8a8a">1</div>
<div class="t" style="left:549px;top:997px;width:40px;text-align:center;font-size:14px;line-height:16px;color:#8a8a8a">2</div>

</div>
</body>
</html>
